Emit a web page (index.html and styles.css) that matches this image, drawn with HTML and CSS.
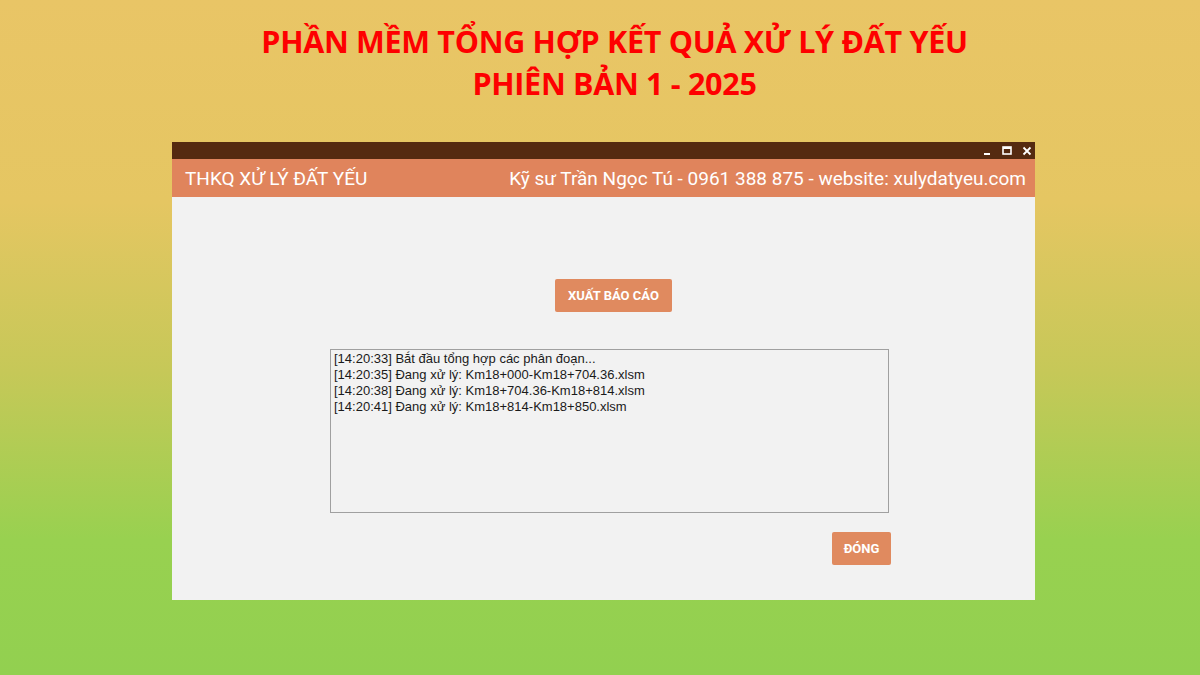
FILE: index.html
```html
<!DOCTYPE html>
<html lang="vi">
<head>
<meta charset="utf-8">
<link rel="stylesheet" href="styles.css">
</head>
<body>
<div class="page">
  <header class="hero">
    <h1 class="hero-line">PHẦN MỀM TỔNG HỢP KẾT QUẢ XỬ LÝ ĐẤT YẾU</h1>
    <h1 class="hero-line">PHIÊN BẢN 1 - 2025</h1>
  </header>
  <div class="window">
    <div class="titlebar">
      <span class="wbtn">
        <svg width="9" height="9" viewBox="0 0 9 9"><rect x="1" y="7" width="6" height="2" fill="#fff"/></svg>
      </span>
      <span class="wbtn">
        <svg width="10" height="9" viewBox="0 0 10 9"><rect x="1" y="1" width="8" height="7" fill="none" stroke="#fff" stroke-width="1.6"/><rect x="1" y="1" width="8" height="2" fill="#fff"/></svg>
      </span>
      <span class="wbtn">
        <svg width="10" height="10" viewBox="0 0 10 10"><path d="M1.5 1.5 L8.5 8.5 M8.5 1.5 L1.5 8.5" stroke="#fff" stroke-width="1.8"/></svg>
      </span>
    </div>
    <div class="appbar">
      <span class="app-name">THKQ XỬ LÝ ĐẤT YẾU</span>
      <span class="app-info">Kỹ sư Trần Ngọc Tú - 0961 388 875 - website: xulydatyeu.com</span>
    </div>
    <div class="content">
      <button class="btn btn-export">XUẤT BÁO CÁO</button>
      <div class="log">
        <div>[14:20:33] Bắt đầu tổng hợp các phân đoạn...</div>
        <div>[14:20:35] Đang xử lý: Km18+000-Km18+704.36.xlsm</div>
        <div>[14:20:38] Đang xử lý: Km18+704.36-Km18+814.xlsm</div>
        <div>[14:20:41] Đang xử lý: Km18+814-Km18+850.xlsm</div>
      </div>
      <div class="footer-row">
        <button class="btn btn-close">ĐÓNG</button>
      </div>
    </div>
  </div>
</div>
</body>
</html>
```
FILE: styles.css
```css
html, body {
  margin: 0;
  padding: 0;
}
body {
  width: 1200px;
  height: 675px;
  overflow: hidden;
  background: linear-gradient(180deg, #e9c566 0%, #e5c662 30%, #c6c858 55%, #98d150 80%, #92d050 100%);
  font-family: Roboto, "Liberation Sans", sans-serif;
}
.page {
  display: flex;
  flex-direction: column;
  align-items: center;
}
.hero {
  padding-top: 20px;
  height: 142px;
  box-sizing: border-box;
  text-align: center;
  margin-left: 29px;
}
.hero-line {
  margin: 0;
  font-family: "Open Sans", sans-serif;
  font-weight: 700;
  font-size: 30.5px;
  line-height: 42px;
  color: #fe0000;
  letter-spacing: -0.3px;
}
.window {
  width: 863px;
  height: 458px;
  margin-left: 7px;
  display: flex;
  flex-direction: column;
  background: #f2f2f2;
}
.titlebar {
  height: 17px;
  background: #552a10;
  display: flex;
  justify-content: flex-end;
  align-items: center;
  gap: 8px;
  padding-right: 2px;
}
.wbtn {
  display: flex;
  width: 12px;
  justify-content: center;
}
.appbar {
  height: 38px;
  background: #e0845c;
  display: flex;
  justify-content: space-between;
  align-items: center;
  padding: 0 9px 0 13px;
  color: #fff;
  font-size: 19px;
}
.content {
  flex: 1;
  display: flex;
  flex-direction: column;
  align-items: center;
  padding-top: 82px;
}
.btn {
  border: none;
  background: #e08a5f;
  color: #fff;
  font-family: Roboto, sans-serif;
  font-weight: 700;
  font-size: 13px;
  border-radius: 2px;
  padding: 0;
}
.btn-export {
  width: 117px;
  height: 33px;
  margin-left: 20px;
}
.log {
  margin-top: 37px;
  width: 559px;
  height: 164px;
  border: 1px solid #a0a0a0;
  background: #f2f2f2;
  padding: 1px 3px 0;
  box-sizing: border-box;
  font-family: "Liberation Sans", sans-serif;
  font-size: 13px;
  line-height: 16px;
  color: #1a1a1a;
  margin-left: 12px;
}
.footer-row {
  width: 100%;
  display: flex;
  justify-content: flex-end;
  padding-right: 144px;
  box-sizing: border-box;
  margin-top: 19px;
}
.btn-close {
  width: 59px;
  height: 33px;
}
```
